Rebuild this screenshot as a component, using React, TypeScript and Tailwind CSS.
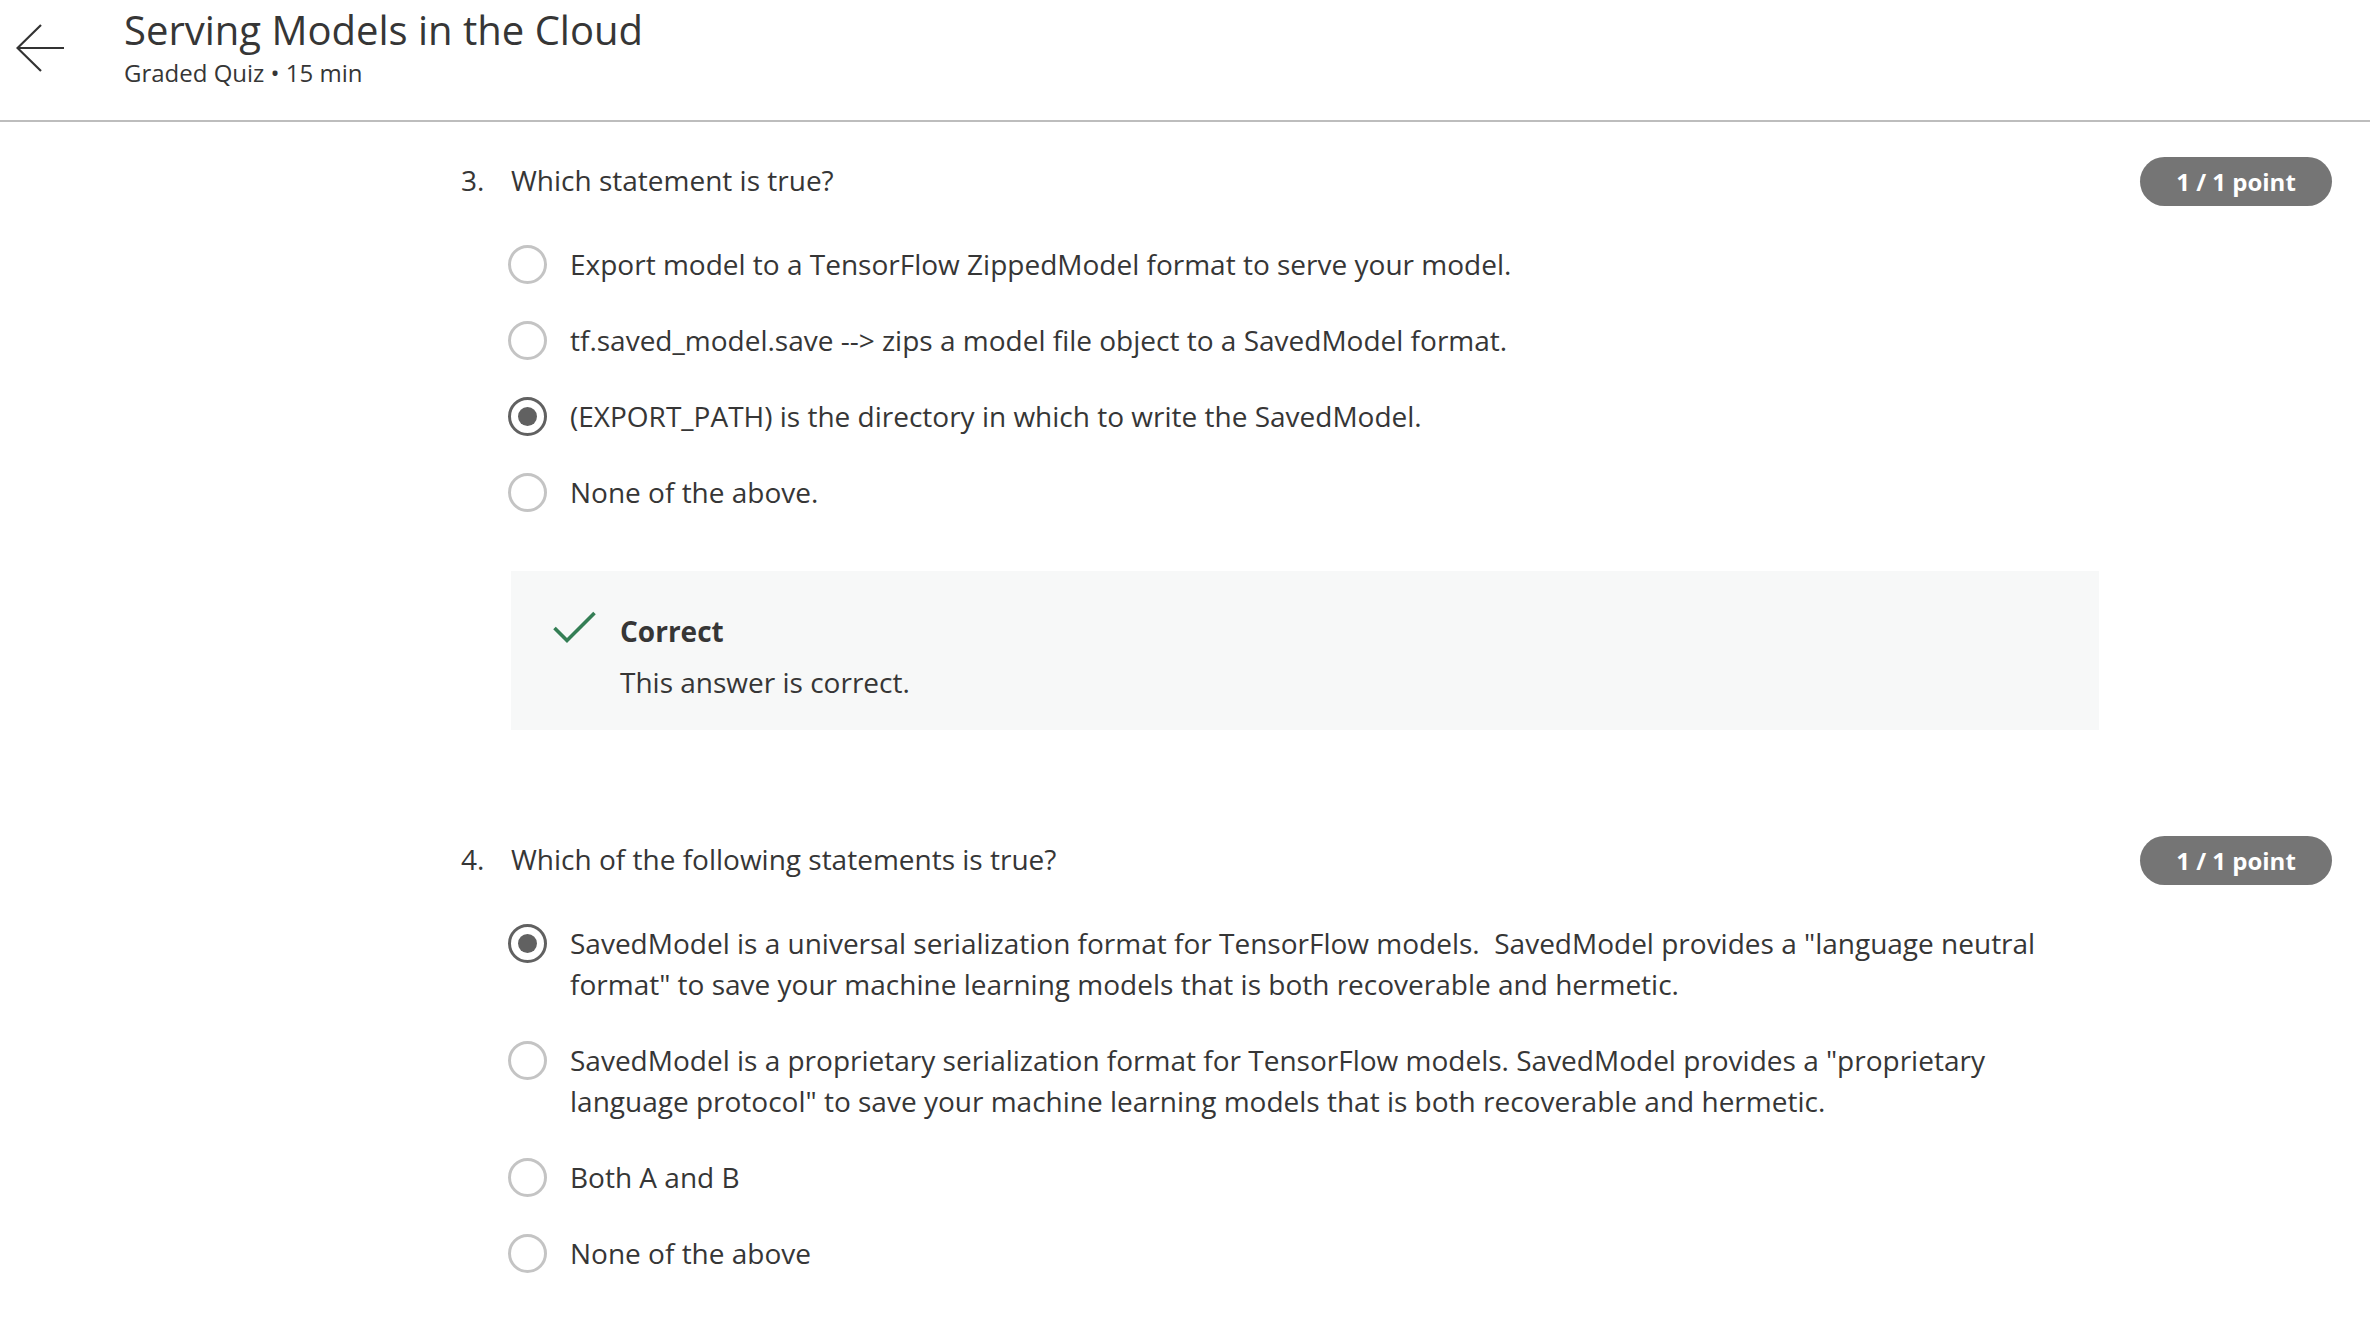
import React from "react";

type Option = { text: string; selected?: boolean };

const q3: Option[] = [
  { text: "Export model to a TensorFlow ZippedModel format to serve your model." },
  { text: "tf.saved_model.save --> zips a model file object to a SavedModel format." },
  { text: "(EXPORT_PATH) is the directory in which to write the SavedModel.", selected: true },
  { text: "None of the above." },
];

const q4: Option[] = [
  {
    text: 'SavedModel is a universal serialization format for TensorFlow models.\u00a0 SavedModel provides a "language neutral format" to save your machine learning models that is both recoverable and hermetic.',
    selected: true,
  },
  {
    text: 'SavedModel is a proprietary serialization format for TensorFlow models. SavedModel provides a "proprietary language protocol" to save your machine learning models that is both recoverable and hermetic.',
  },
  { text: "Both A and B" },
  { text: "None of the above" },
];

function Radio({ selected }: { selected?: boolean }) {
  if (selected) {
    return (
      <span className="flex h-[39px] w-[39px] shrink-0 items-center justify-center rounded-full border-[3.5px] border-[#616161]">
        <span className="h-[19px] w-[19px] rounded-full bg-[#616161]" />
      </span>
    );
  }
  return <span className="h-[39px] w-[39px] shrink-0 rounded-full border-[3px] border-[#c4c4c4]" />;
}

function Badge() {
  return (
    <div className="flex h-[49px] w-[192px] items-center justify-center rounded-full bg-[#757575] text-[24px] font-bold text-white">
      1 / 1 point
    </div>
  );
}

function Question({ num, title, options }: { num: number; title: string; options: Option[] }) {
  return (
    <div>
      <div className="flex items-center justify-between">
        <div className="-mt-[2px] flex text-[28px] leading-[41px]">
          <span className="w-[50px]">{num}.</span>
          <span>{title}</span>
        </div>
        <Badge />
      </div>
      <div className="ml-[47px] mt-[38px] flex w-[1591px] flex-col gap-[35px]">
        {options.map((o, i) => (
          <div key={i} className="flex items-start gap-[23px]">
            <div className="flex h-[41px] items-center">
              <Radio selected={o.selected} />
            </div>
            <p className="text-[28px] leading-[41px]">{o.text}</p>
          </div>
        ))}
      </div>
    </div>
  );
}

export default function App() {
  return (
    <div className="min-h-screen bg-white text-[#363636]" style={{ fontFamily: '"Open Sans", "Noto Sans", sans-serif' }}>
      <header className="flex h-[122px] border-b-2 border-[#bdbdbd]">
        <div className="pl-[16px] pt-[24px]">
          <svg width="50" height="48" viewBox="0 0 50 48" fill="none" stroke="#333" strokeWidth="2.2">
            <path d="M1 24 H48" />
            <path d="M25 1 L1.5 24 L25 47" />
          </svg>
        </div>
        <div className="ml-[58px] pt-[6px]">
          <h1 className="text-[40px] leading-[48px] font-normal">Serving Models in the Cloud</h1>
          <p className="mt-[4px] text-[24px] leading-[30px]">Graded Quiz • 15 min</p>
        </div>
      </header>

      <main className="pl-[461px] pr-[38px] pt-[35px]">
        <Question num={3} title="Which statement is true?" options={q3} />

        <div className="ml-[50px] mt-[58px] w-[1588px] bg-[#f7f8f8] pb-[27px] pl-[42px] pt-[40px]">
          <div className="flex items-start">
            <svg width="44" height="34" viewBox="0 0 44 34" fill="none" stroke="#347e55" strokeWidth="3.6">
              <path d="M1.5 17 L14 29.5 L41.5 2" />
            </svg>
            <span className="ml-[23px] text-[28px] font-bold leading-[41px]">Correct</span>
          </div>
          <p className="ml-[67px] mt-[10px] text-[28px] leading-[41px]">This answer is correct.</p>
        </div>

        <div className="mt-[106px]">
          <Question num={4} title="Which of the following statements is true?" options={q4} />
        </div>
      </main>
    </div>
  );
}
